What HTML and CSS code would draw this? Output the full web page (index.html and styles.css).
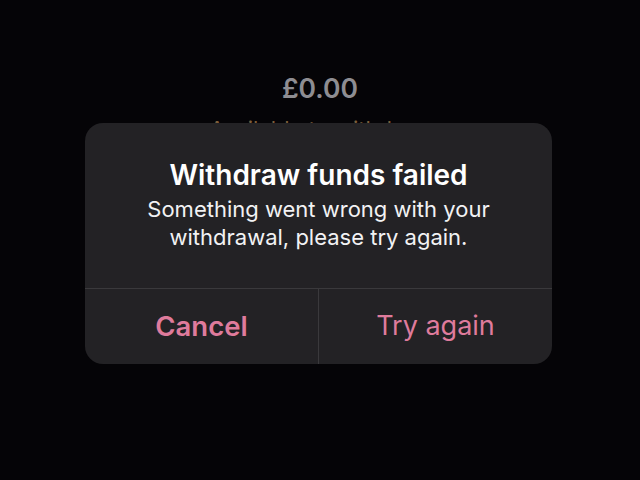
FILE: index.html
```html
<!DOCTYPE html>
<html>
<head>
<meta charset="utf-8">
<link rel="stylesheet" href="styles.css">
</head>
<body>
<div class="screen">
  <div class="balance">
    <div class="amount">£0.00</div>
    <div class="available">Available to withdraw</div>
  </div>
  <div class="alert">
    <div class="alert-body">
      <div class="alert-title">Withdraw funds failed</div>
      <div class="alert-msg">Something went wrong with your<br>withdrawal, please try again.</div>
    </div>
    <div class="alert-actions">
      <div class="btn btn-cancel">Cancel</div>
      <div class="btn btn-retry">Try again</div>
    </div>
  </div>
</div>
</body>
</html>
```
FILE: styles.css
```css
html, body {
  margin: 0;
  padding: 0;
  background: #050407;
}
.screen {
  position: relative;
  width: 640px;
  height: 480px;
  overflow: hidden;
  font-family: Inter, "Noto Sans", sans-serif;
}
.balance {
  display: flex;
  flex-direction: column;
  align-items: center;
  padding-top: 72px;
}
.amount {
  font-size: 26.5px;
  font-weight: 600;
  color: #8e8d92;
  line-height: 32px;
}
.available {
  margin-top: 12px;
  font-size: 22px;
  color: #7d5f3c;
  line-height: 26px;
}
.alert {
  position: absolute;
  left: 85px;
  top: 123px;
  width: 467px;
  height: 241px;
  background: #232225;
  border-radius: 18px;
  display: flex;
  flex-direction: column;
  color: #fff;
}
.alert-body {
  height: 166px;
  display: flex;
  flex-direction: column;
  align-items: center;
  padding-top: 34px;
  box-sizing: border-box;
  text-align: center;
  border-bottom: 1px solid #3a393c;
}
.alert-title {
  font-size: 28px;
  font-weight: 600;
  line-height: 36px;
}
.alert-msg {
  margin-top: 2px;
  font-size: 22px;
  line-height: 28px;
  color: #f2f2f4;
}
.alert-actions {
  flex: 1;
  display: flex;
}
.btn {
  flex: 1;
  display: flex;
  align-items: center;
  justify-content: center;
  font-size: 27px;
  color: #df7b9c;
  padding-bottom: 2px;
}
.btn-cancel {
  font-weight: 600;
  font-size: 27.5px;
  border-right: 1px solid #3a393c;
}
```
